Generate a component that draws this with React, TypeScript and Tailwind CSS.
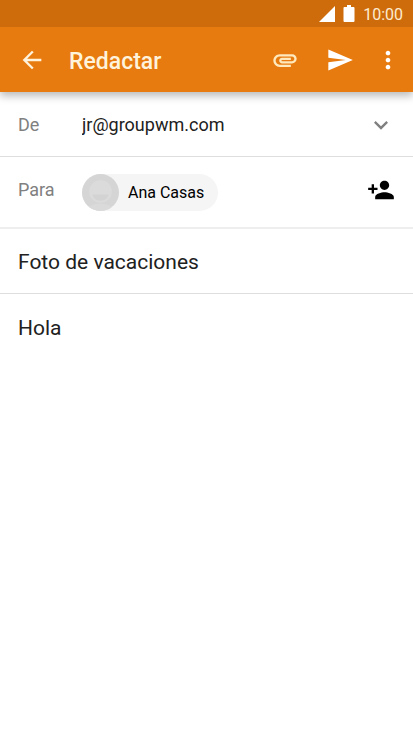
import { useState } from "react";

function Icon({ d, className = "" }: { d: string; className?: string }) {
  return (
    <svg viewBox="0 0 24 24" fill="currentColor" aria-hidden="true" className={`size-7 shrink-0 ${className}`}>
      <path d={d} />
    </svg>
  );
}

const icons = {
  back: "M20 11H7.83l5.59-5.59L12 4l-8 8 8 8 1.41-1.41L7.83 13H20v-2z",
  attach:
    "M2 12.5C2 9.46 4.46 7 7.5 7H18c2.21 0 4 1.79 4 4s-1.79 4-4 4H9.5C8.12 15 7 13.88 7 12.5S8.12 10 9.5 10H17v2H9.41c-.55 0-.55 1 0 1H18c1.1 0 2-.9 2-2s-.9-2-2-2H7.5C5.57 9 4 10.57 4 12.5S5.57 16 7.5 16H17v2H7.5C4.46 18 2 15.54 2 12.5z",
  send: "M2.01 21L23 12 2.01 3 2 10l15 2-15 2z",
  more: "M12 8c1.1 0 2-.9 2-2s-.9-2-2-2-2 .9-2 2 .9 2 2 2zm0 2c-1.1 0-2 .9-2 2s.9 2 2 2 2-.9 2-2-.9-2-2-2zm0 6c-1.1 0-2 .9-2 2s.9 2 2 2 2-.9 2-2-.9-2-2-2z",
  expand: "M16.59 8.59L12 13.17 7.41 8.59 6 10l6 6 6-6z",
  addPerson:
    "M15 12c2.21 0 4-1.79 4-4s-1.79-4-4-4-4 1.79-4 4 1.79 4 4 4zm-9-2V7H4v3H1v2h3v3h2v-3h3v-2H6zm9 4c-2.67 0-8 1.34-8 4v2h16v-2c0-2.66-5.33-4-8-4z",
};

function StatusBar() {
  return (
    <div className="flex h-[27px] items-center justify-end bg-[#ce6c0c] pr-[10px] text-[#fdebd0]">
      <svg viewBox="0 0 16 16" className="mr-2 size-4 fill-white" aria-hidden="true">
        <path d="M16 0v16H0z" />
      </svg>
      <svg viewBox="0 0 12 17" className="mr-2 h-[17px] w-3 fill-white" aria-hidden="true">
        <path d="M4 0h4v2h2.500q1 0 1 1v13q0 1-1 1h-9q-1 0-1-1V3q0-1 1-1H4z" />
      </svg>
      <time className="pt-0.5 text-base leading-6">10:00</time>
    </div>
  );
}

function Avatar() {
  return (
    <svg viewBox="0 0 36 36" className="size-[37px]" aria-hidden="true">
      <clipPath id="avatar-clip">
        <circle cx="18" cy="18" r="18" />
      </clipPath>
      <g clipPath="url(#avatar-clip)">
        <rect width="36" height="36" fill="#d5d5d5" />
        <path d="M5 36c1-5 6-7 13-7s12 2 13 7z" fill="#dadada" />
        <circle cx="18" cy="17" r="11" fill="#dbdbdb" />
        <path d="M10 20h16c-1 4-4 6-8 6s-7-2-8-6z" fill="#d3d3d3" />
      </g>
    </svg>
  );
}

export default function App() {
  const [subject, setSubject] = useState("Foto de vacaciones");
  const [body, setBody] = useState("Hola");

  return (
    <div className="flex min-h-screen flex-col bg-white font-[Roboto,sans-serif] text-[#212121]">
      <header className="shadow-[0_4px_8px_rgba(0,0,0,0.27)]">
        <StatusBar />
        <div className="flex h-[65px] items-center bg-[#e77b0f] pr-[11px] pl-[18px] text-white">
          <button type="button" aria-label="Atrás" className="text-[#fff3dc]">
            <Icon d={icons.back} />
          </button>
          <h1 className="ml-[23px] flex-1 pt-1 text-[23px] leading-7 font-medium text-[#fff3dc]">Redactar</h1>
          <div className="flex items-center">
            <button type="button" aria-label="Adjuntar" className="mr-[27px] text-[#ffe9bd]">
              <Icon d={icons.attach} />
            </button>
            <button type="button" aria-label="Enviar" className="mr-5">
              <Icon d={icons.send} />
            </button>
            <button type="button" aria-label="Más opciones">
              <Icon d={icons.more} />
            </button>
          </div>
        </div>
      </header>

      <form className="flex flex-1 flex-col" onSubmit={(e) => e.preventDefault()}>
        <div className="flex h-[65px] items-center border-b border-[#dedede] px-[18px] pt-0.5">
          <label htmlFor="from" className="w-16 text-lg text-[#808080]">
            De
          </label>
          <div className="grid flex-1 items-center">
            <select id="from" className="col-start-1 row-start-1 w-full appearance-none bg-transparent text-lg outline-none">
              <option>jr@groupwm.com</option>
            </select>
            <Icon d={icons.expand} className="pointer-events-none col-start-1 row-start-1 justify-self-end text-[#808080]" />
          </div>
        </div>

        <div className="flex h-[72px] items-center border-b-2 border-[#eeeeee] px-[18px]">
          <span className="w-16 pb-1 text-lg text-[#808080]">Para</span>
          <div className="flex flex-1">
            <div className="flex items-center rounded-full bg-[#f5f5f5] pr-[14px] text-base text-black">
              <Avatar />
              <span className="ml-[9px] pt-0.5">Ana Casas</span>
            </div>
          </div>
          <button type="button" aria-label="Añadir contacto" className="pb-1 text-black">
            <Icon d={icons.addPerson} />
          </button>
        </div>

        <input
          aria-label="Asunto"
          value={subject}
          onChange={(e) => setSubject(e.target.value)}
          className="h-[65px] border-b border-[#dedede] px-[18px] pt-0.5 text-[21px] leading-7 outline-none"
        />
        <textarea
          aria-label="Mensaje"
          value={body}
          onChange={(e) => setBody(e.target.value)}
          className="flex-1 resize-none px-[18px] pt-5 text-[21px] leading-7 outline-none"
        />
      </form>
    </div>
  );
}
